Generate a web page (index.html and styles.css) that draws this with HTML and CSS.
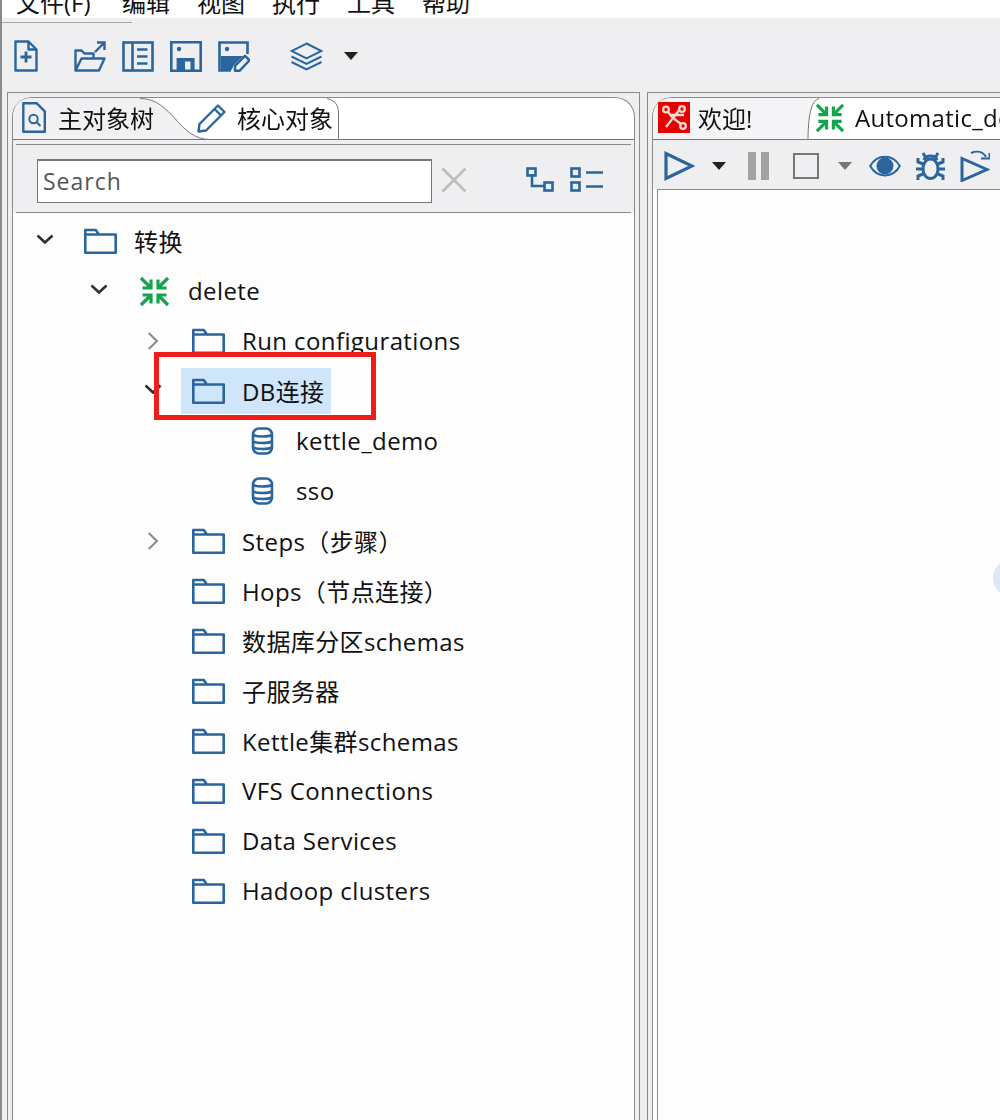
FILE: index.html
```html
<!DOCTYPE html>
<html lang="zh-CN">
<head>
<meta charset="utf-8">
<title>Kettle</title>
<link rel="stylesheet" href="styles.css">
</head>
<body>
<svg class="defs" width="0" height="0" aria-hidden="true">
  <symbol id="folder" viewBox="0 0 33 26"><path d="M1.300 24.700V6.500h30.400v18.200zM1.300 6.500V2h10.500l3 4.500" fill="none" stroke="#2a659e" stroke-width="2.600" stroke-linejoin="round"/></symbol>
  <symbol id="green" viewBox="0 0 31 31"><path d="M2 2l10 10M12 3.500V12H3.500M29 2L19 12M19 3.500V12h8.500M2 29l10-10M12 27.500V19H3.500M29 29L19 19M19 27.500V19h8.500" fill="none" stroke="#12a54a" stroke-width="3.200"/></symbol>
  <symbol id="db" viewBox="0 0 22 28"><g fill="none" stroke="#2a659e" stroke-width="2.600"><rect x="1.500" y="1.500" width="19" height="25" rx="6"/><path d="M1.500 8c4 2 15 2 19 0M1.500 14.500c4 2 15 2 19 0M1.500 20.500c4 2 15 2 19 0"/></g></symbol>
  <symbol id="chev-down" viewBox="0 0 18 10"><path d="M1.500 1.500L9 8.500l7.500-7" fill="none" stroke="#303030" stroke-width="2.600"/></symbol>
  <symbol id="chev-right" viewBox="0 0 11 18"><path d="M1.200 1L9.500 9l-8.300 8" fill="none" stroke="#858585" stroke-width="1.900"/></symbol>
</svg>
<div class="app">
  <nav class="menubar">
    <span class="menu menu-file">文件(F)</span>
    <span class="menu">编辑</span>
    <span class="menu">视图</span>
    <span class="menu">执行</span>
    <span class="menu">工具</span>
    <span class="menu">帮助</span>
  </nav>
  <div class="menu-rule"></div>
  <div class="toolbar">
    <svg class="ic-new" viewBox="0 0 24 32"><path d="M1.500 1.500h13l8 8v21h-21zM14.500 1.500v8h8" fill="none" stroke="#2a659e" stroke-width="2.400" stroke-linejoin="round"/><path d="M12 11.500v11M6.500 17h11" stroke="#2a659e" stroke-width="2.800"/></svg>
    <svg class="ic-open" viewBox="0 0 32 31"><path d="M1.500 29.500V9.500h6l3 3h9v5M1.500 29.500l6-12h23l-5.500 12z" fill="none" stroke="#2a659e" stroke-width="2.400" stroke-linejoin="round"/><path d="M21 11L30 2M23 1.500h7.500V9" fill="none" stroke="#2a659e" stroke-width="2.400"/></svg>
    <svg class="ic-tool" viewBox="0 0 32 31"><rect x="1.500" y="1.500" width="29" height="28" fill="none" stroke="#2a659e" stroke-width="2.600"/><path d="M10.500 1.500v28M15 8.500h10.500M15 15.500h10.500M15 22.500h10.500" stroke="#2a659e" stroke-width="2.600"/></svg>
    <svg class="ic-tool" viewBox="0 0 32 31"><path fill-rule="evenodd" d="M0 0h32v31H0zM2.600 2.600v25.800h4V17h18v11.400h4.800V2.600zM15 20.500v7.900h5.500v-7.900z" fill="#2a659e"/><circle cx="9" cy="8" r="2.200" fill="#2a659e"/></svg>
    <svg class="ic-saveas" viewBox="0 0 32 31"><path d="M13 29.500H1.500v-28h28V13" fill="none" stroke="#2a659e" stroke-width="2.600"/><circle cx="9" cy="8" r="2.200" fill="#2a659e"/><path d="M3 15h22l-9 9-2.500 5H3z" fill="#2a659e"/><path d="M17 29.800v-5l10-10 4.500 4.500-10 10.500z" fill="#efeff1" stroke="#2a659e" stroke-width="2.400" stroke-linejoin="round"/></svg>
    <svg class="ic-layers" viewBox="0 0 33 29"><path d="M16.500 1.500L31.500 9l-15 7.500L1.500 9z" fill="none" stroke="#2a659e" stroke-width="2"/><path d="M1.500 14.500l15 7.500 15-7.500M1.500 20l15 7.500 15-7.500" fill="none" stroke="#2a659e" stroke-width="2"/></svg>
    <span class="caret"></span>
  </div>
  <div class="workspace">
    <section class="panel panel-left">
      <div class="folder">
        <div class="tabstrip">
          <svg class="tabshape" viewBox="0 0 326 42" preserveAspectRatio="none"><path d="M0 42V20Q0 0 20 0H127C160 0 165 42 197 42Z" fill="#f1f1f3"/><path d="M127 .500C160 .500 165 41.500 197 41.500H326M325.500 41V14Q325.500 3 314 .5" fill="none" stroke="#777" stroke-width="1"/></svg>
          <div class="tab tab-main">
            <svg class="ic-doc" viewBox="0 0 24 31"><path d="M1.300 1.300h13.500l8 8v20.400H1.300z" fill="none" stroke="#2a659e" stroke-width="2.400" stroke-linejoin="round"/><circle cx="11.500" cy="17" r="4.200" fill="none" stroke="#2a659e" stroke-width="2"/><path d="M14.500 20l4 4" stroke="#2a659e" stroke-width="2"/></svg>
            <span>主对象树</span>
          </div>
          <div class="tab tab-core">
            <svg class="ic-pencil" viewBox="0 0 30 30"><path d="M1.500 28.500L2.500 21 21 2.500l6.500 6.500L9 27.500zM17.500 6l6.500 6.500" fill="none" stroke="#2a659e" stroke-width="2.400" stroke-linejoin="round"/></svg>
            <span>核心对象</span>
          </div>
        </div>
        <div class="filter">
          <div class="filter-row">
            <div class="search">Search</div>
            <svg class="ic-clear" viewBox="0 0 26 26"><path d="M1.500 1.500l23 23M24.500 1.500l-23 23" stroke="#bdbdbd" stroke-width="2.600"/></svg>
            <svg class="ic-treeview" viewBox="0 0 28 25"><path d="M6 7v12h12" fill="none" stroke="#2a659e" stroke-width="2.600"/><rect x="1.500" y="1.500" width="8" height="7" fill="none" stroke="#2a659e" stroke-width="2.600"/><rect x="18.500" y="15.500" width="8" height="8" fill="none" stroke="#2a659e" stroke-width="2.600"/></svg>
            <svg class="ic-listview" viewBox="0 0 33 25"><rect x="1.500" y="1.500" width="8" height="8" fill="none" stroke="#2a659e" stroke-width="2.600"/><rect x="1.500" y="15.500" width="8" height="8" fill="none" stroke="#2a659e" stroke-width="2.600"/><path d="M16 5.500h17M16 19.500h17" stroke="#2a659e" stroke-width="2.600"/></svg>
          </div>
        </div>
        <div class="tree">
          <div class="row lv0"><svg class="chev"><use href="#chev-down"/></svg><span class="node"><svg class="ic-folder"><use href="#folder"/></svg><span>转换</span></span></div>
          <div class="row lv1"><svg class="chev"><use href="#chev-down"/></svg><span class="node"><svg class="ic-green"><use href="#green"/></svg><span>delete</span></span></div>
          <div class="row lv2"><svg class="chev chev-r"><use href="#chev-right"/></svg><span class="node"><svg class="ic-folder"><use href="#folder"/></svg><span>Run configurations</span></span></div>
          <div class="row lv2"><svg class="chev"><use href="#chev-down"/></svg><span class="node node-sel"><svg class="ic-folder"><use href="#folder"/></svg><span>DB连接</span></span></div>
          <div class="row lv3"><span class="chev"></span><span class="node"><svg class="ic-db"><use href="#db"/></svg><span>kettle_demo</span></span></div>
          <div class="row lv3"><span class="chev"></span><span class="node"><svg class="ic-db"><use href="#db"/></svg><span>sso</span></span></div>
          <div class="row lv2"><svg class="chev chev-r"><use href="#chev-right"/></svg><span class="node"><svg class="ic-folder"><use href="#folder"/></svg><span>Steps（步骤）</span></span></div>
          <div class="row lv2"><span class="chev"></span><span class="node"><svg class="ic-folder"><use href="#folder"/></svg><span>Hops（节点连接）</span></span></div>
          <div class="row lv2"><span class="chev"></span><span class="node"><svg class="ic-folder"><use href="#folder"/></svg><span>数据库分区schemas</span></span></div>
          <div class="row lv2"><span class="chev"></span><span class="node"><svg class="ic-folder"><use href="#folder"/></svg><span>子服务器</span></span></div>
          <div class="row lv2"><span class="chev"></span><span class="node"><svg class="ic-folder"><use href="#folder"/></svg><span>Kettle集群schemas</span></span></div>
          <div class="row lv2"><span class="chev"></span><span class="node"><svg class="ic-folder"><use href="#folder"/></svg><span>VFS Connections</span></span></div>
          <div class="row lv2"><span class="chev"></span><span class="node"><svg class="ic-folder"><use href="#folder"/></svg><span>Data Services</span></span></div>
          <div class="row lv2"><span class="chev"></span><span class="node"><svg class="ic-folder"><use href="#folder"/></svg><span>Hadoop clusters</span></span></div>
          <div class="redbox"></div>
        </div>
      </div>
    </section>
    <section class="panel panel-right">
      <div class="folder folder-right">
        <div class="tabstrip">
          <svg class="tabshape" viewBox="0 0 348 42" preserveAspectRatio="none"><path d="M0 42V20Q0 0 20 0H165Q155 3 155 42Z" fill="#f4f4f6"/><path d="M166 .500Q155 3 155 42M0 41.500H348" fill="none" stroke="#777"/></svg>
          <div class="tab tab-welcome">
            <svg class="ic-logo" viewBox="0 0 32 31"><rect width="32" height="31" fill="#e60000"/><g fill="none" stroke="#f7d9d0" stroke-width="2.300"><circle cx="8" cy="7.500" r="2.800"/><circle cx="24" cy="7" r="2.800"/><circle cx="25" cy="24" r="2.800"/><path d="M10 10l5 6-7 9M15 16l8 6M13 13h13M16 15l5-7"/></g></svg>
            <span>欢迎!</span>
          </div>
          <div class="tab tab-auto">
            <svg class="ic-green-tab"><use href="#green"/></svg>
            <span>Automatic_demo</span>
          </div>
        </div>
        <div class="runbar">
          <svg class="ic-play" viewBox="0 0 31 30"><path d="M2 2.500v25l26-12.500z" fill="none" stroke="#2a659e" stroke-width="3.200"/></svg>
          <span class="caret caret-run"></span>
          <svg class="ic-pause" viewBox="0 0 21 28"><path d="M0 0h8v28H0zM13 0h8v28h-8z" fill="#a2a2a2"/></svg>
          <svg class="ic-stop" viewBox="0 0 26 26"><rect x="1" y="1" width="24" height="24" fill="none" stroke="#777" stroke-width="2"/></svg>
          <span class="caret caret-grey"></span>
          <svg class="ic-eye" viewBox="0 0 32 22"><path d="M1.200 11C8 -1.500 24 -1.500 30.800 11 24 23.500 8 23.500 1.200 11z" fill="none" stroke="#2a659e" stroke-width="2"/><circle cx="16" cy="11" r="8.500" fill="#2a659e"/></svg>
          <svg class="ic-bug" viewBox="0 0 31 28"><path d="M15.500 7c5 0 7.500 5 7.500 10s-3 9.500-7.500 9.500S8 22 8 17s2.500-10 7.500-10z" fill="none" stroke="#2a659e" stroke-width="3"/><path d="M9 8C10 5 13 4 15.500 4S21 5 22 8M8 1l3 5M23 1l-3 5M8 12L3 10V6M23 12l5-2V6M7 17H1M24 17h6M8 22l-5 2v4M23 22l5 2v4" fill="none" stroke="#2a659e" stroke-width="3"/></svg>
          <svg class="ic-step" viewBox="0 0 30 32"><path d="M2 8.500v22l25-11z" fill="none" stroke="#2a659e" stroke-width="3"/><path d="M11 3c6-2.500 12-1.500 15 4" fill="none" stroke="#2a659e" stroke-width="2"/><path d="M21 8.500h8.500V3" fill="none" stroke="#2a659e" stroke-width="2"/></svg>
        </div>
        <div class="canvas"><span class="expander"></span></div>
      </div>
    </section>
  </div>
</div>
</body>
</html>
```
FILE: styles.css
```css
* { box-sizing: border-box; }
html, body { margin: 0; padding: 0; }
body {
  background: #efeff1;
  font-family: "Open Sans", "Noto Sans CJK SC", sans-serif;
  font-size: 24px;
  letter-spacing: 0.4px;
  color: #111;
}
svg { display: block; flex: none; }
.defs { position: absolute; }
.app {
  width: 1000px;
  height: 1120px;
  display: flex;
  flex-direction: column;
  overflow: hidden;
  border-left: 2px solid #8a8a8a;
  filter: blur(0.35px);
}
.menubar {
  height: 18px;
  flex: none;
  background: #fff;
  display: flex;
  align-items: flex-end;
  padding-left: 14px;
  gap: 27px;
  overflow: hidden;
  letter-spacing: 0;
}
.menu { flex: none; line-height: 30px; width: 48px; white-space: nowrap; }
.menu-file { width: 79px; }
.menu-rule { width: 130px; height: 1px; margin-top: 4px; background: #a8a8a8; flex: none; }
.toolbar {
  height: 69px;
  flex: none;
  display: flex;
  align-items: center;
  padding: 0 0 3px 12px;
}
.ic-new { width: 24px; height: 32px; margin-right: 36px; }
.ic-open { width: 32px; height: 31px; margin-right: 16px; }
.ic-tool { width: 32px; height: 31px; margin-right: 16px; }
.ic-saveas { width: 32px; height: 31px; margin-right: 40px; }
.ic-layers { width: 33px; height: 29px; margin-right: 21px; }
.caret {
  width: 0; height: 0; flex: none;
  border-left: 7px solid transparent;
  border-right: 7px solid transparent;
  border-top: 8px solid #222;
}
.workspace { flex: 1; display: flex; gap: 7px; padding-left: 5px; min-height: 0; }
.panel {
  border: 1px solid #8a8a8a;
  border-bottom: 0;
  padding: 4px 4px 0;
  display: flex;
  min-height: 0;
}
.panel-left { width: 633px; flex: none; }
.panel-right { flex: 1; min-width: 0; border-right: 0; padding-right: 0; }
.folder {
  flex: 1;
  min-width: 0;
  display: flex;
  flex-direction: column;
  border-left: 1px solid #8a8a8a;
  border-right: 1px solid #8a8a8a;
  border-top: 1px solid #8a8a8a;
  border-radius: 20px 20px 0 0;
  background: #fff;
}
.folder-right { border-right: 0; border-top-right-radius: 0; }
.tabstrip {
  height: 42px;
  flex: none;
  position: relative;
  display: flex;
  align-items: center;
  border-bottom: 1px solid #777;
  overflow: hidden;
}
.tabshape { position: absolute; left: 0; top: 0; height: 42px; width: 326px; }
.folder-right .tabshape { width: 348px; }
.tab { position: relative; display: flex; align-items: center; flex: none; margin-top: -2px; letter-spacing: 0; }
.tab-main { padding-left: 9px; gap: 12px; width: 184px; }
.tab-core { gap: 10px; }
.ic-doc { width: 24px; height: 31px; }
.ic-pencil { width: 30px; height: 30px; }
.tab-welcome { padding-left: 5px; gap: 8px; width: 162px; }
.tab-auto { gap: 10px; white-space: nowrap; letter-spacing: 0.3px; }
.ic-logo { width: 32px; height: 31px; }
.ic-green-tab { width: 30px; height: 30px; }
.filter {
  height: 73px;
  flex: none;
  background: #efeff1;
  padding: 4px 3px 0;
  display: flex;
}
.filter-row {
  flex: 1;
  display: flex;
  align-items: center;
  border-top: 1px solid #8a8a8a;
  border-bottom: 1px solid #8a8a8a;
  padding: 4px 0 0 21px;
  height: 69px;
}
.search {
  width: 395px;
  height: 44px;
  background: #fff;
  border: 1px solid #777;
  border-top-width: 2px;
  padding-left: 5px;
  line-height: 41px;
  color: #555;
  font-size: 23px;
  letter-spacing: 1px;
}
.ic-clear { width: 26px; height: 26px; margin: -2px 59px 0 9px; }
.ic-treeview { width: 28px; height: 25px; margin: -2px 16px 0 0; }
.ic-listview { width: 33px; height: 25px; margin-top: -2px; }
.tree { flex: 1; position: relative; background: #fdfdfe; padding-top: 3px; min-height: 0; }
.row { height: 50px; display: flex; align-items: center; }
.lv0 { padding-left: 19px; }
.lv1 { padding-left: 73px; }
.lv2 { padding-left: 127px; }
.lv3 { padding-left: 181px; }
.chev { width: 26px; height: 10px; flex: none; margin-right: 26px; margin-top: -4px; }
.chev-r { width: 26px; height: 18px; margin-top: 0; }
.node { display: flex; align-items: center; gap: 17px; height: 46px; white-space: nowrap; }
.node span { margin-top: -2px; }
.node-sel { background: #cfe5fa; margin-left: -11px; padding: 0 6px 0 11px; }
.ic-folder { width: 33px; height: 26px; }
.ic-green { width: 33px; height: 31px; }
.ic-db { width: 33px; height: 28px; }
.redbox {
  position: absolute;
  left: 141px;
  top: 139px;
  width: 222px;
  height: 68px;
  border: 5px solid #f01c17;
}
.runbar {
  height: 49px;
  flex: none;
  background: #efeff1;
  display: flex;
  align-items: center;
  padding: 3px 0 0 11px;
}
.ic-play { width: 31px; height: 30px; margin-right: 17px; }
.caret-run { margin-right: 22px; }
.ic-pause { width: 21px; height: 28px; margin-right: 24px; }
.ic-stop { width: 26px; height: 26px; margin-right: 19px; }
.caret-grey { border-top-color: #777; margin-right: 17px; }
.ic-eye { width: 32px; height: 22px; margin-right: 14px; }
.ic-bug { width: 31px; height: 28px; margin-right: 14px; }
.ic-step { width: 30px; height: 32px; }
.canvas {
  flex: 1;
  position: relative;
  margin-left: 4px;
  background: #fdfdfe;
  border-left: 1px solid #8a8a8a;
  border-top: 1px solid #8a8a8a;
}
.expander {
  position: absolute;
  left: 335px;
  top: 369px;
  width: 38px;
  height: 38px;
  border-radius: 50%;
  background: #dbe8f5;
}
```
